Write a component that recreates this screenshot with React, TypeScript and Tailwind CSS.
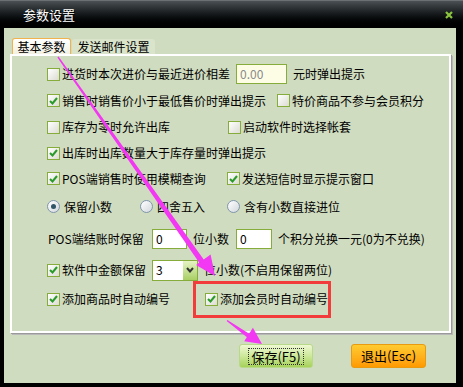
import React from 'react';

const FONT = "font-['Noto_Sans_CJK_SC','Noto_Sans_CJK_JP',sans-serif]";

function Check({ on }: { on?: boolean }) {
  return (
    <span className="w-[13px] h-[13px] shrink-0 border border-[#86ad3c] bg-gradient-to-br from-white to-[#dcdcd2] flex items-center justify-center">
      {on && (
        <svg width="9" height="8" viewBox="0 0 9 8">
          <path d="M1 4 L3.5 6.5 L8 1" fill="none" stroke="#2a9b2a" strokeWidth="2" />
        </svg>
      )}
    </span>
  );
}

function Radio({ on }: { on?: boolean }) {
  return (
    <span className="w-[13px] h-[13px] shrink-0 rounded-full border border-[#7f95ad] bg-gradient-to-br from-white to-[#d3d8dc] flex items-center justify-center">
      {on && <span className="w-[5px] h-[5px] rounded-full bg-[#2f5566]" />}
    </span>
  );
}

function Item({ on, label, radio }: { on?: boolean; label: string; radio?: boolean }) {
  return (
    <span className="flex items-center gap-[2px] whitespace-nowrap">
      {radio ? <Radio on={on} /> : <Check on={on} />}
      <span className={radio ? 'ml-[2px]' : ''}>{label}</span>
    </span>
  );
}

function Field({ w, value, gray }: { w: string; value: string; gray?: boolean }) {
  return (
    <span
      className={`${w} h-[20px] shrink-0 border border-[#86ad3c] ${gray ? 'bg-[#fdfde6] text-[#8a8a8a]' : 'bg-white text-black'} flex items-center pl-[3px] text-[12px]`}
    >
      {value}
    </span>
  );
}

export default function App() {
  return (
    <div className={`relative w-[463px] h-[387px] bg-black overflow-hidden text-[12px] leading-[14px] text-black ${FONT}`}>
      {/* title bar */}
      <div className="h-[28px] flex items-center justify-between pl-[23px] pr-[10px] bg-gradient-to-b from-[#4a5053] via-[#14181a] to-black border-t border-[#6b7073]">
        <span className="text-white text-[13px] [text-shadow:1px_1px_0_#000]">参数设置</span>
        <svg width="8" height="8" viewBox="0 0 8 8">
          <path d="M1 1 L7 7 M7 1 L1 7" stroke="#8cc63f" strokeWidth="2.2" />
        </svg>
      </div>

      <div className="ml-[4px] mr-[7px] h-[355px] bg-[#d0dcbf] pt-[10px] pl-[6px]">
        {/* tabs */}
        <div className="flex items-end h-[16px] pl-[2px] gap-[1px]">
          <div className="w-[59px] h-[16px] rounded-t-[3px] border border-b-0 border-[#f0b24e] bg-gradient-to-b from-white to-[#f3f1e2] flex items-center justify-center">
            基本参数
          </div>
          <div className="w-[83px] h-[15px] rounded-t-[3px] bg-[#dae4cb] flex items-center justify-center">
            发送邮件设置
          </div>
        </div>

        {/* panel */}
        <div className="w-[441px] h-[279px] border-2 border-white shadow-[1px_1px_0_#9a9a9a,2px_2px_0_#b8b8b8] pt-[5px] pl-[35px] flex flex-col">
          <div className="h-[26px] flex items-center">
            <span className="w-[189px]"><Item label="进货时本次进价与最近进价相差" /></span>
            <Field w="w-[51px]" value="0.00" gray />
            <span className="ml-[6px]">元时弹出提示</span>
          </div>
          <div className="h-[27px] flex items-center">
            <span className="w-[230px]"><Item on label="销售时销售价小于最低售价时弹出提示" /></span>
            <Item label="特价商品不参与会员积分" />
          </div>
          <div className="h-[26px] flex items-center">
            <span className="w-[181px]"><Item label="库存为零时允许出库" /></span>
            <Item label="启动软件时选择帐套" />
          </div>
          <div className="h-[26px] flex items-center">
            <Item on label="出库时出库数量大于库存量时弹出提示" />
          </div>
          <div className="h-[25px] flex items-center">
            <span className="w-[180px]"><Item on label="POS端销售时使用模糊查询" /></span>
            <Item on label="发送短信时显示提示窗口" />
          </div>
          <div className="h-[31px] flex items-center">
            <span className="w-[93px]"><Item radio on label="保留小数" /></span>
            <span className="w-[87px]"><Item radio label="四舍五入" /></span>
            <Item radio label="含有小数直接进位" />
          </div>
          <div className="h-[34px] flex items-center">
            <span className="w-[105px] pl-[1px]">POS端结账时保留</span>
            <Field w="w-[35px]" value="0" />
            <span className="w-[49px] pl-[6px]">位小数</span>
            <Field w="w-[36px]" value="0" />
            <span className="ml-[6px]">个积分兑换一元(0为不兑换)</span>
          </div>
          <div className="h-[28px] flex items-center">
            <span className="w-[105px]"><Item on label="软件中金额保留" /></span>
            <span className="w-[46px] h-[21px] border border-[#86ad3c] bg-white flex items-center justify-between">
              <span className="pl-[3px]">3</span>
              <span className="w-[14px] h-[19px] bg-gradient-to-b from-[#e6f3c4] to-[#a9cf63] flex items-center justify-center">
                <svg width="8" height="6" viewBox="0 0 8 6">
                  <path d="M1 1 L4 4.5 L7 1" fill="none" stroke="#333" strokeWidth="2" />
                </svg>
              </span>
            </span>
            <span className="ml-[6px]">位小数(不启用保留两位)</span>
          </div>
          <div className="h-[30px] flex items-center">
            <span className="w-[146px]"><Item on label="添加商品时自动编号" /></span>
            <span className="w-[138px] h-[37px] border-[3px] border-[#f23c3c] flex items-center pl-[9px]">
              <Item on label="添加会员时自动编号" />
            </span>
          </div>
        </div>

        {/* buttons */}
        <div className="flex items-center mt-[11px] pl-[229px] gap-[38px]">
          <button className="w-[74px] h-[24px] rounded-[3px] border border-[#b9d98a] bg-gradient-to-b from-[#eef8d2] via-[#cde89a] to-[#a6d158] flex items-center justify-center text-[13px]">
            <span className="border border-dotted border-[#333] px-[2px] leading-[15px]">保存(F5)</span>
          </button>
          <button className="w-[75px] h-[24px] rounded-[3px] border border-[#e89a10] bg-gradient-to-b from-[#ffcb2e] to-[#ff9a00] flex items-center justify-center text-[13px]">
            退出(Esc)
          </button>
        </div>
      </div>

      {/* annotation arrows */}
      <svg className="absolute inset-0 pointer-events-none" width="463" height="387" viewBox="0 0 463 387">
        <polygon points="57.4,57.4 58.6,56.6 205.5,262 201,265.2" fill="#f238f2" />
        <polygon points="215,276 196,264.9 210.6,254.5" fill="#f238f2" />
        <polygon points="226.6,321 227.4,319.9 250,334.2 247.6,337.8" fill="#f238f2" />
        <polygon points="262,344 244.2,341.2 252.9,327.8" fill="#f238f2" />
      </svg>
    </div>
  );
}
